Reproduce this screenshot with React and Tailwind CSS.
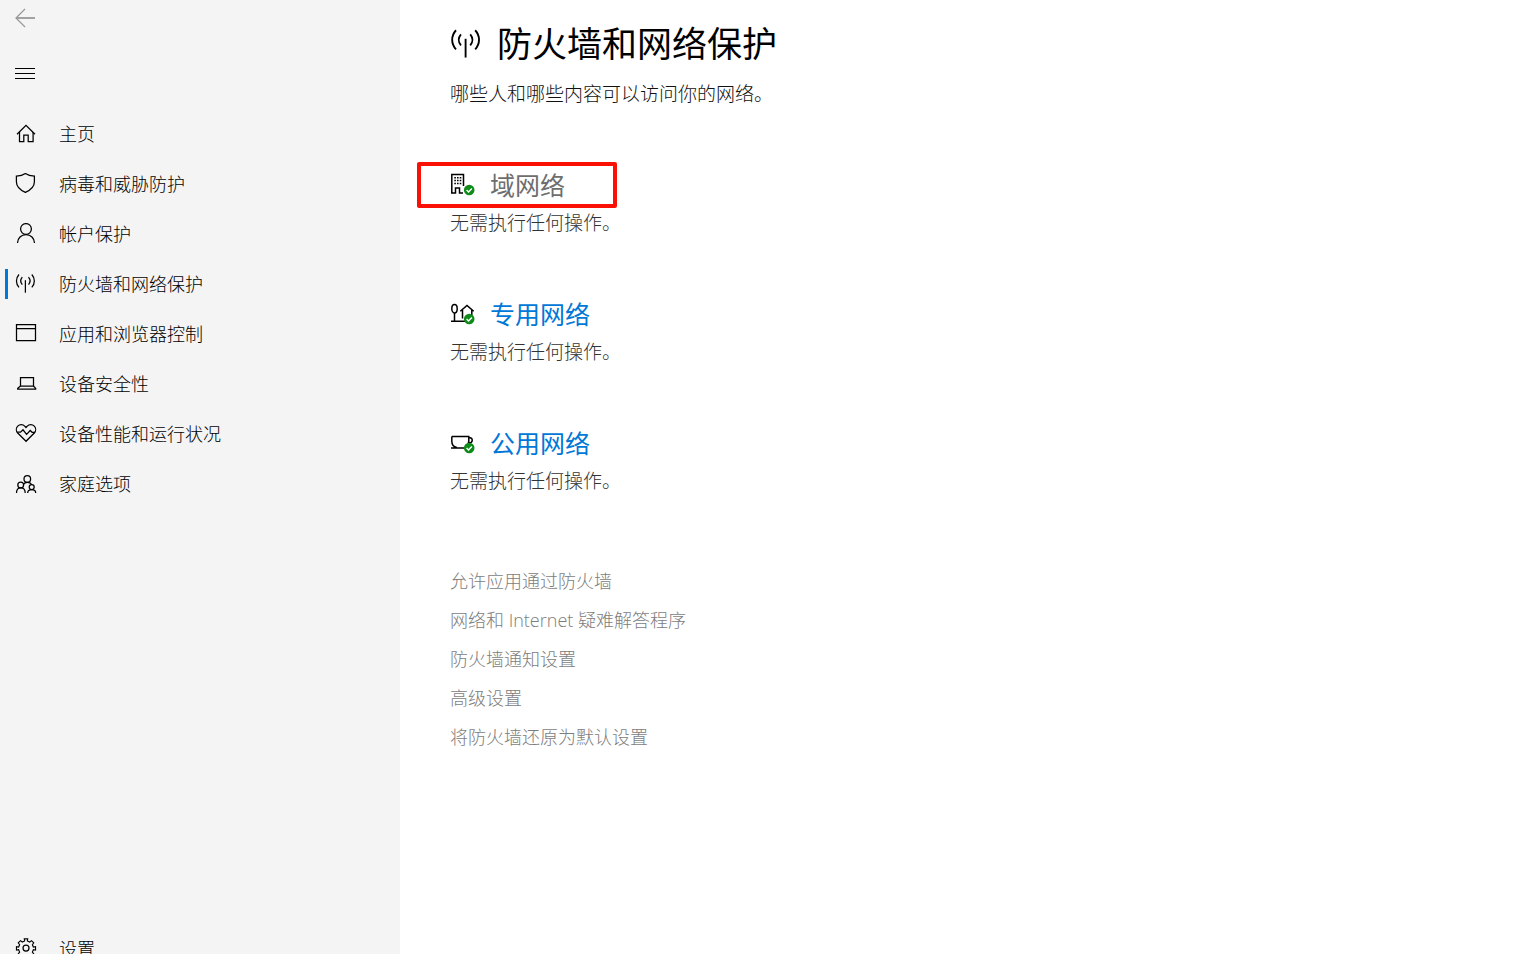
import React from 'react';

const Icon = ({ children, className = 'size-[22px]', viewBox = '0 0 22 22', strokeWidth = 1.25 }) => (
    <svg
        className={`shrink-0 ${className}`}
        viewBox={viewBox}
        fill="none"
        stroke="currentColor"
        strokeWidth={strokeWidth}
        aria-hidden="true"
    >
        {children}
    </svg>
);

const BackIcon = () => (
    <Icon>
        <path d="M1 11h19" strokeWidth="1.8" />
        <path d="M10 2 1 11l9 9" />
    </Icon>
);

const MenuIcon = () => (
    <Icon strokeWidth={1}>
        <path d="M0 6.5h20M0 11.5h20M0 16.5h20" />
    </Icon>
);

const HomeIcon = () => (
    <Icon>
        <path d="M2 11.2 11 2.3l9 8.9" />
        <path d="M4.5 9v9.6h4.3v-6.4h4.4v6.4h4.9V9" />
    </Icon>
);

const ShieldIcon = () => (
    <Icon>
        <path d="M10.4.6C8 2.3 4.8 3 1.4 3v5.7c0 5 4.2 8.5 9 10.7 4.8-2.2 9-5.7 9-10.7V3c-3.4 0-6.6-.7-9-2.4Z" />
    </Icon>
);

const PersonIcon = () => (
    <Icon>
        <circle cx="11" cy="6" r="5.4" />
        <path d="M2.5 20a8.5 8.5 0 0 1 17 0" />
    </Icon>
);

const SignalIcon = ({ className }) => (
    <Icon className={className}>
        <path d="M10.4 7.2v12.5" />
        <path d="M7.3 4.2c-1.9 2.2-1.9 5.2 0 7.4M13.5 4.2c1.9 2.2 1.9 5.2 0 7.4" />
        <path d="M4 1.5C.6 5.3.6 10.5 4 14.3M16.8 1.5c3.4 3.8 3.4 9 0 12.8" />
    </Icon>
);

const WindowIcon = () => (
    <Icon>
        <path d="M1.5 1.5h19v16h-19zM1.5 5.5h19" />
    </Icon>
);

const LaptopIcon = () => (
    <Icon>
        <path d="M5.5 4.5h13V13h-13zM5.5 13l-2.8 2.4v.8h18v-.8L18.500 13" />
    </Icon>
);

const HeartIcon = () => (
    <Icon>
        <path d="M11 18.3 2.7 10C.9 8 .9 5 2.7 3.1c2-2 5.2-2 7 0L11 4.5l1.3-1.4c1.8-2 5-2 7 0 1.8 1.9 1.8 4.9 0 6.9Z" />
        <path d="M2.5 9.2h3L8 6.8l3.6 4.6 3.6-3.900 1.900 1.800h2.800" />
    </Icon>
);

const FamilyIcon = () => (
    <Icon>
        <circle cx="12.3" cy="6" r="3.3" />
        <circle cx="5.7" cy="12" r="2.9" />
        <circle cx="16.7" cy="14" r="2.5" />
        <path d="M1.5 20c0-3.2 1.700-5.100 4.300-5.100s4.400 1.900 4.400 5.100M12.700 20c0-2.200 1.600-3.500 4-3.500s4 1.300 4 3.500" />
        <path d="M8.500 11.300c.8-1.300 2-2 3.800-2 1.900 0 3.500.8 4.400 2.200" />
    </Icon>
);

const GearIcon = () => (
    <Icon>
        <circle cx="11" cy="10" r="3" />
        <path
            d="M9.5 3.8 9.1 1.4h3.8l-.4 2.4 2.6 1.100 2-1.500 2.500 2.500-1.500 2 1.100 2.600 2.400-.4v3.800l-2.400-.4-1.100 2.600 1.500 2-2.500 2.500-2-1.500-2.600 1.100.4 2.400H9.100l.4-2.400-2.600-1.100-2 1.500-2.500-2.500 1.500-2-1.100-2.600-2.400.4v-3.800l2.400.4 1.100-2.600-1.500-2 2.500-2.500 2 1.500Z"
            transform="translate(1.1 -.4) scale(.9)"
        />
    </Icon>
);

// network drawing with the green "ok" badge in its corner
const NetworkIcon = ({ children }) => (
    <Icon className="size-[26px]" viewBox="0 0 26 26" strokeWidth={1.5}>
        {children}
        <circle cx="19.2" cy="18" r="5.3" fill="#0f8b1a" stroke="none" />
        <path d="m16.6 18 1.9 1.9 3.4-3.5" stroke="#fff" strokeWidth="1.4" />
    </Icon>
);

const DomainIcon = () => (
    <NetworkIcon>
        <path d="M1.8 21V2.5h11.7V14M1 21h4.5v-5h4v5H13" />
        <path d="M4.3 5.8h7M4.3 8.6h7M4.3 11.4h7" strokeDasharray="1.6 1.1" />
    </NetworkIcon>
);

const PrivateIcon = () => (
    <NetworkIcon>
        <ellipse cx="4.5" cy="7.7" rx="2.7" ry="4.2" />
        <path d="M4.5 12v8M1 20.2h14M10.3 10.3 17 4.5l6.7 5.8M12.500 9v8.500M21.800 9v5" />
    </NetworkIcon>
);

const PublicIcon = () => (
    <NetworkIcon>
        <path d="M1.8 6.5h17V11c0 3-1.5 5-3 6M1.8 6.5V11c0 4 2.2 6 5 6.5M1 18h14M18.8 7.5c5 0 4 5.5.5 5.5" />
    </NetworkIcon>
);

const NAV_ITEMS = [
    { label: '主页', icon: HomeIcon },
    { label: '病毒和威胁防护', icon: ShieldIcon },
    { label: '帐户保护', icon: PersonIcon },
    { label: '防火墙和网络保护', icon: SignalIcon, active: true },
    { label: '应用和浏览器控制', icon: WindowIcon },
    { label: '设备安全性', icon: LaptopIcon },
    { label: '设备性能和运行状况', icon: HeartIcon },
    { label: '家庭选项', icon: FamilyIcon },
];

const NETWORKS = [
    { label: '域网络', icon: DomainIcon, color: 'text-[#6e6e6e]', marked: true },
    { label: '专用网络', icon: PrivateIcon, color: 'text-[#0078d7]' },
    { label: '公用网络', icon: PublicIcon, color: 'text-[#0078d7]' },
];

const LINKS = [
    '允许应用通过防火墙',
    '网络和 Internet 疑难解答程序',
    '防火墙通知设置',
    '高级设置',
    '将防火墙还原为默认设置',
];

const NavItem = ({ label, icon: ItemIcon, active }) => (
    <a
        href="#"
        aria-current={active ? 'page' : undefined}
        className="flex h-[50px] items-center pl-[5px] text-lg/6"
    >
        <span className={`mr-[7px] h-[30px] w-[3px] ${active ? 'bg-[#0078d7]' : ''}`} />
        <ItemIcon />
        <span className="ml-[22px]">{label}</span>
    </a>
);

const App = () => (
    <div className="flex min-h-screen bg-white font-['Open_Sans','Noto_Sans_CJK_SC',sans-serif] font-light text-black">
        <aside className="flex h-screen w-[400px] shrink-0 flex-col overflow-hidden bg-[#f4f4f4]">
            <button type="button" aria-label="返回" className="flex h-9 w-12 items-center pl-[15px] text-[#999999]">
                <BackIcon />
            </button>
            <button type="button" aria-label="菜单" className="mt-3 flex h-[50px] w-12 items-center pl-[15px]">
                <MenuIcon />
            </button>
            <nav className="mt-[11px]">
                {NAV_ITEMS.map((item) => (
                    <NavItem key={item.label} {...item} />
                ))}
            </nav>
            <div className="-mb-5 mt-auto">
                <NavItem label="设置" icon={GearIcon} />
            </div>
        </aside>

        <main className="min-w-0 flex-1 px-[50px] pt-5">
            <div className="flex h-12 items-center gap-3.5">
                <SignalIcon className="size-[33px]" />
                <h1 className="text-[35px]/12 font-normal">防火墙和网络保护</h1>
            </div>
            <p className="mt-3.5 text-[19px]/6 text-[#111111]">哪些人和哪些内容可以访问你的网络。</p>

            <div className="mt-[59px] flex flex-col gap-[59px]">
                {NETWORKS.map(({ label, icon: NetIcon, color, marked }) => (
                    <section key={label}>
                        <div className="relative flex h-10 items-center gap-3.5">
                            <NetIcon />
                            <h2 className="text-[25px]/8 font-normal">
                                <a href="#" className={color}>{label}</a>
                            </h2>
                            {marked && (
                                <span className="pointer-events-none absolute -left-[33px] -top-[3px] h-[46px] w-[200px] rounded-xs border-4 border-[#fb1005]" />
                            )}
                        </div>
                        <p className="mt-1.5 text-[19px]/6 text-[#333333]">无需执行任何操作。</p>
                    </section>
                ))}
            </div>

            <ul className="mt-[68px] text-lg/6 text-[#7d7d7d]">
                {LINKS.map((label) => (
                    <li key={label} className="flex h-[39px] items-center">
                        <a href="#">{label}</a>
                    </li>
                ))}
            </ul>
        </main>
    </div>
);

export default App;
